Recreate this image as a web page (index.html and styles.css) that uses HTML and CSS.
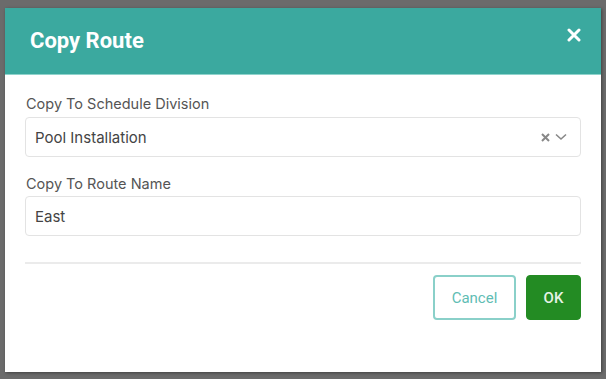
FILE: index.html
```html
<!DOCTYPE html>
<html lang="en">
  <head>
    <meta charset="UTF-8" />
    <title>Copy Route</title>
    <link rel="stylesheet" href="styles.css">
  </head>
  <body>
    <div class="modal">
      <div class="modal-header">
        <h2 class="modal-title">Copy Route</h2>
        <button class="close" type="button" aria-label="Close">
          <svg width="14" height="14" viewBox="0 0 14 14">
            <path d="M2 2 L12 12 M12 2 L2 12" stroke="#fff" stroke-width="3" stroke-linecap="round" />
          </svg>
        </button>
      </div>
      <div class="modal-body">
        <label class="field-label">Copy To Schedule Division</label>
        <div class="select">
          <span class="select-value">Pool Installation</span>
          <span class="select-icons">
            <svg width="9" height="9" viewBox="0 0 9 9">
              <path d="M1 1 L8 8 M8 1 L1 8" stroke="#888" stroke-width="2" />
            </svg>
            <svg width="12" height="8" viewBox="0 0 12 8">
              <path d="M1 1.5 L6 6 L11 1.5" fill="none" stroke="#888" stroke-width="1.6" />
            </svg>
          </span>
        </div>
        <label class="field-label second">Copy To Route Name</label>
        <input class="text-input" type="text" value="East" />
        <hr class="divider" />
        <div class="actions">
          <button class="btn btn-cancel" type="button">Cancel</button>
          <button class="btn btn-ok" type="button">OK</button>
        </div>
      </div>
    </div>
  </body>
</html>
```

FILE: styles.css
```css
html,
body {
  height: 100%;
}
body {
  margin: 0;
  padding: 8px 5px 7px 5px;
  box-sizing: border-box;
  background: #6b6b6b;
  font-family: Roboto, "Liberation Sans", sans-serif;
}
.modal {
  background: #fff;
  height: 364px;
  box-shadow: 1px 1px 3px rgba(0, 0, 0, 0.4);
}
.modal-header {
  display: flex;
  align-items: center;
  justify-content: space-between;
  height: 66px;
  padding: 0 20px 0 25px;
  background: #3ba99f;
  border-bottom: 1px solid #8fd3cc;
}
.modal-title {
  margin: 0;
  margin-top: -1px;
  color: #fff;
  font-size: 22px;
  font-weight: 700;
}
.close {
  background: none;
  border: none;
  padding: 0;
  margin-top: -12px;
  display: flex;
  cursor: pointer;
}
.modal-body {
  display: flex;
  flex-direction: column;
  padding: 19px 20px 0 20px;
}
.field-label {
  font-family: Inter, Roboto, sans-serif;
  font-size: 14.5px;
  line-height: 19px;
  color: #555;
  margin: 0 0 4px 1px;
}
.field-label.second {
  margin-top: 17px;
  margin-bottom: 3px;
}
.select,
.text-input {
  box-sizing: border-box;
  height: 40px;
  border: 1px solid #e3e3e3;
  border-radius: 4px;
  font-family: Inter, Roboto, sans-serif;
  font-size: 15px;
  color: #444;
}
.select {
  display: flex;
  align-items: center;
  justify-content: space-between;
  padding: 0 13px 0 9px;
}
.select-icons {
  display: flex;
  align-items: center;
  gap: 5px;
}
.text-input {
  width: 100%;
  padding: 0 9px;
  outline: none;
}
.divider {
  border: none;
  border-top: 2px solid #ebebeb;
  margin: 26px 0 11px 0;
}
.actions {
  display: flex;
  justify-content: flex-end;
  gap: 10px;
}
.btn {
  height: 45px;
  border-radius: 4px;
  font-family: inherit;
  font-size: 15px;
  cursor: pointer;
}
.btn-cancel {
  width: 83px;
  background: #fff;
  border: 2px solid #8ad0c9;
  color: #5fbdb4;
}
.btn-ok {
  width: 55px;
  background: #238b23;
  border: 1px solid #238b23;
  color: #e6f3e6;
  font-weight: 500;
}
```
